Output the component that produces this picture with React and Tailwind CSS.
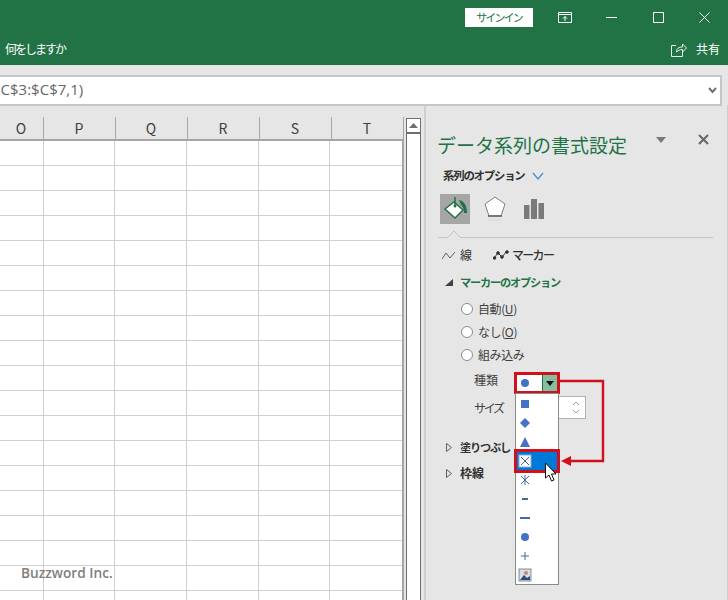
import React from "react";

const font = { fontFamily: '"Noto Sans CJK JP","Noto Sans",sans-serif' };
const cols = [
  ["O", "w-[44px]"],
  ["P", "w-[72px]"],
  ["Q", "w-[72px]"],
  ["R", "w-[72px]"],
  ["S", "w-[72px]"],
  ["T", "w-[72px]"],
];
const rows = Array.from({ length: 19 }, (_, i) => i);

function Radio({ label, u, checked }) {
  return (
    <div className="flex h-[23px] items-center pl-[35px] text-[12px] text-[#404040]">
      <span className="flex h-[12px] w-[12px] items-center justify-center rounded-full border border-[#8c8c8c] bg-white">
        {checked && <span className="h-[6px] w-[6px] rounded-full bg-[#6e6e6e]" />}
      </span>
      <span className="ml-[5px] tracking-[-0.4px]">
        {label}
        {u && (
          <>
            (<span className="underline">{u}</span>)
          </>
        )}
      </span>
    </div>
  );
}

function Marker({ children }) {
  return (
    <div className="flex h-[19px] items-center pl-[2px]">
      <svg width="14" height="14" viewBox="0 0 14 14">{children}</svg>
    </div>
  );
}

export default function App() {
  return (
    <div className="relative flex h-[600px] w-[728px] flex-col overflow-hidden bg-[#e6e6e6]" style={font}>
      {/* title bar + ribbon */}
      <div className="h-[65px] shrink-0 bg-[#217346] text-white">
        <div className="flex h-[34px] items-center pt-[1px]">
          <div className="ml-[465px] flex h-[19px] w-[68px] items-center justify-center bg-white text-[11px] tracking-[-1.9px] text-[#217346]">サインイン</div>
          <svg className="ml-[25px]" width="14" height="12" viewBox="0 0 14 12" fill="none" stroke="white">
            <path d="M.5.5h13v10H.5zM.5 2.5h13M7 9V4.5M5 6.5l2-2 2 2" />
          </svg>
          <svg className="ml-[34px]" width="11" height="11" viewBox="0 0 11 11" stroke="white"><path d="M0 5.5h11" /></svg>
          <svg className="ml-[36px]" width="11" height="11" viewBox="0 0 11 11" fill="none" stroke="white"><path d="M.5.5h10v10H.5z" /></svg>
          <svg className="ml-[35px]" width="11" height="11" viewBox="0 0 11 11" fill="none" stroke="white"><path d="M.5.5l10 10M10.5.5l-10 10" /></svg>
        </div>
        <div className="flex h-[30px] items-center justify-between pl-[5px] pr-[8px] text-[12px]">
          <span className="tracking-[-2px]">何をしますか</span>
          <span className="flex items-center">
            <svg width="16" height="15" viewBox="0 0 16 15" fill="none" stroke="white">
              <path d="M5 3.5H.5v11h11V10M5.5 10c0-3.5 2-5 6-5V2l4 4-4 4V7.5c-2.5 0-4 .8-6 2.5z" strokeWidth="0.9" />
            </svg>
            <span className="ml-[9px]">共有</span>
          </span>
        </div>
      </div>

      {/* formula bar */}
      <div className="shrink-0 pr-[6px] pt-[10px]">
        <div className="flex h-[31px] items-center justify-between overflow-hidden border-y-2 border-r-2 border-[#c6c6c6] bg-white pr-[3px] text-[15px] leading-none text-[#666666]">
          <span className="-ml-[8px] -mt-[2px]" style={{ fontFamily: '"Open Sans",sans-serif' }}>$C$3:$C$7,1)</span>
          <svg width="9" height="7" viewBox="0 0 9 7" fill="none" stroke="#707070" strokeWidth="2"><path d="M1 1l3.5 4L8 1" /></svg>
        </div>
      </div>

      {/* body */}
      <div className="flex min-h-0 flex-1 pt-[11px]">
        <div className="w-[404px] shrink-0 overflow-hidden">
          <div className="flex h-[24px] border-b-2 border-[#a6a6a6] bg-[#e6e6e6]">
            {cols.map(([c, w]) => (
              <div key={c} className={`${w} flex items-center justify-center border-r border-[#a6a6a6] pr-[1px] text-[14px] text-[#404040]`}>{c}</div>
            ))}
          </div>
          <div className="border-r-2 border-[#a6a6a6] bg-white">
            {rows.map((r) => (
              <div key={r} className="flex h-[25px]">
                {cols.map(([c, w]) => (
                  <div key={c} className={`${w} border-b border-r border-[#d0d0d0] last:border-r-0`} />
                ))}
              </div>
            ))}
          </div>
        </div>

        {/* scrollbar */}
        <div className="ml-[2px] mt-[1px] w-[15px] shrink-0 border-x border-t border-[#6e6e6e] bg-white">
          <div className="flex h-[15px] items-center justify-center border-b-2 border-[#6e6e6e]">
            <svg width="9" height="5" viewBox="0 0 9 5" fill="#6e6e6e"><path d="M4.5 0L9 5H0z" /></svg>
          </div>
        </div>

        {/* side panel */}
        <div className="-mt-[12px] ml-[3px] flex-1 border-l-2 border-r border-[#cfcfcf] pt-[12px]">
          <div className="relative flex h-[28px] items-center pl-[11px] pt-[27px] text-[19px] leading-none text-[#217346]">
            <span>データ系列の書式設定</span>
            <svg className="absolute left-[230px] top-[20px]" width="10" height="6" viewBox="0 0 10 6" fill="#7a7a7a"><path d="M0 0h10L5 6z" /></svg>
            <svg className="absolute left-[272px] top-[17px]" width="11" height="11" viewBox="0 0 11 11" stroke="#666" strokeWidth="2"><path d="M1 1l9 9M10 1l-9 9" /></svg>
          </div>
          <div className="mt-[23px] flex h-[16px] items-center pl-[17px] text-[11.4px] font-bold leading-none tracking-[-1.2px] text-[#303030]">
            系列のオプション
            <svg className="ml-[7px]" width="12" height="8" viewBox="0 0 12 8" fill="none" stroke="#4a90c8" strokeWidth="1.3"><path d="M1 1l5 6 5-6" /></svg>
          </div>
          <div className="mt-[10px] flex h-[30px] items-center pl-[14px]">
            <div className="flex h-[30px] w-[30px] items-center justify-center bg-[#a6a6a6]">
              <svg width="26" height="26" viewBox="0 0 26 26">
                <path d="M12 6l9 8-8 8-10-9z" fill="white" stroke="#217346" strokeWidth="1.5" />
                <path d="M13 1v9" stroke="#217346" strokeWidth="1.5" />
                <circle cx="13" cy="10" r="1.5" fill="#217346" />
                <path d="M17 4c5 1 8 5 8 13h-3c0-4-1-6-3-8z" fill="#217346" />
              </svg>
            </div>
            <svg className="ml-[13px]" width="24" height="28" viewBox="0 0 24 28" fill="white" stroke="#808080">
              <path d="M12 2l10 7-4 12H6L2 9z" />
              <path d="M5 21h14" stroke="#606060" strokeWidth="1.5" />
              <path d="M5 25h14" stroke="#d8d8d8" />
            </svg>
            <svg className="ml-[17px]" width="20" height="20" viewBox="0 0 20 20" fill="#7a7a7a">
              <path d="M0 6h5.5v14H0zM7 0h6v20H7zM14.5 4H20v16h-5.5z" />
            </svg>
          </div>
          <div className="relative ml-[12px] mr-[14px] mt-[13px] h-0 border-t border-[#c6c6c6]">
            <svg className="absolute -top-[8px] left-[9px]" width="14" height="8" viewBox="0 0 14 8" fill="#e6e6e6" stroke="#c6c6c6"><path d="M0 8l7-7 7 7" /></svg>
          </div>
          <div className="mt-[7px] flex h-[20px] items-center pl-[16px] text-[12px] text-[#303030]">
            <svg width="13" height="9" viewBox="0 0 13 9" fill="none" stroke="#606060"><path d="M0 8l4-6 4 5 5-6" /></svg>
            <span className="ml-[5px]">線</span>
            <svg className="ml-[21px]" width="16" height="10" viewBox="0 0 16 10" fill="none" stroke="#303030"><path d="M1 8l4-5 4 4 5-6" /><circle cx="1.5" cy="8" r="1.3" fill="#303030" /><circle cx="5" cy="3" r="1.3" fill="#303030" /><circle cx="9" cy="7" r="1.3" fill="#303030" /><circle cx="14" cy="2" r="1.3" fill="#303030" /></svg>
            <span className="ml-[3px] font-medium tracking-[-1.7px]">マーカー</span>
          </div>
          <div className="mt-[7px] flex h-[20px] items-center pl-[19px] text-[11.2px] font-bold tracking-[-1.2px] text-[#217346]">
            <svg width="8" height="7" viewBox="0 0 8 7" fill="#404040"><path d="M8 0v7H0z" /></svg>
            <span className="ml-[7px]">マーカーのオプション</span>
          </div>
          <div className="mt-[5px]">
            <Radio label="自動" u="U" />
            <Radio label="なし" u="O" />
            <Radio label="組み込み" />
          </div>
          <div className="flex h-[28px] items-center pl-[48px] text-[12px] text-[#404040]">
            種類
          </div>
          <div className="flex h-[27px] items-center pl-[48px] text-[12px] text-[#404040]">
            <span className="tracking-[-2.3px]">サイズ</span>
            <div className="ml-[50px] flex h-[23px] w-[33px] flex-col items-end justify-center gap-[3px] border border-[#b0b0b0] bg-white pr-[5px]">
              <svg width="8" height="5" viewBox="0 0 8 5" fill="none" stroke="#a0a0a0"><path d="M1 4l3-3 3 3" /></svg>
              <svg width="8" height="5" viewBox="0 0 8 5" fill="none" stroke="#a0a0a0"><path d="M1 1l3 3 3-3" /></svg>
            </div>
          </div>
          <div className="mt-[13px] flex h-[26px] items-center pl-[20px] text-[11.2px] font-bold tracking-[-1.2px] text-[#303030]">
            <svg width="6" height="9" viewBox="0 0 6 9" fill="none" stroke="#606060"><path d="M.5.5l5 4-5 4z" /></svg>
            <span className="ml-[8px]">塗りつぶし</span>
          </div>
          <div className="flex h-[26px] items-center pl-[20px] text-[12px] font-bold text-[#303030]">
            <svg width="6" height="9" viewBox="0 0 6 9" fill="none" stroke="#606060"><path d="M.5.5l5 4-5 4z" /></svg>
            <span className="ml-[8px]">枠線</span>
          </div>
        </div>
      </div>

      {/* watermark */}
      <div className="absolute left-[21px] top-[563px] text-[13.7px] font-semibold leading-[20px] text-[#7f7f7f]" style={{ fontFamily: '"Open Sans",sans-serif' }}>Buzzword Inc.</div>

      {/* marker combo (open) */}
      <div className="absolute left-[514px] top-[372px] flex h-[22px] w-[46px] border-[3px] border-[#d2101c] bg-white">
        <div className="flex w-[25px] items-center pl-[3px]">
          <svg width="10" height="10" viewBox="0 0 10 10"><circle cx="5" cy="5" r="4" fill="#4472c4" /></svg>
        </div>
        <div className="flex flex-1 items-center justify-center border-l border-[#217346] bg-[#86bfa0]">
          <svg width="8" height="5" viewBox="0 0 8 5" fill="#111"><path d="M0 0h8L4 5z" /></svg>
        </div>
      </div>

      {/* marker list */}
      <div className="absolute left-[515px] top-[393px] h-[192px] w-[44px] border border-[#8a8a8a] bg-white">
        <Marker><path d="M3 3h8v8H3z" fill="#4472c4" /></Marker>
        <Marker><path d="M7 2l5 5-5 5-5-5z" fill="#4472c4" /></Marker>
        <Marker><path d="M7 2l5 10H2z" fill="#4472c4" /></Marker>
        <div className="flex h-[19px] items-center bg-[#0078d7] pl-[2px]">
          <svg width="14" height="14" viewBox="0 0 14 14"><rect x="1" y="1" width="12" height="12" fill="white" stroke="#90b0d8" /><path d="M3 3l8 8M11 3l-8 8" stroke="#3f5f8f" /></svg>
        </div>
        <Marker><path d="M3 3l8 8M11 3l-8 8M7 2v10" stroke="#44699b" fill="none" /></Marker>
        <Marker><path d="M4 7h6" stroke="#44699b" strokeWidth="2" /></Marker>
        <Marker><path d="M2 7h10" stroke="#44699b" strokeWidth="2" /></Marker>
        <Marker><circle cx="7" cy="7" r="4" fill="#4472c4" /></Marker>
        <Marker><path d="M7 3v8M3 7h8" stroke="#44699b" fill="none" /></Marker>
        <Marker>
          <rect x="1" y="1" width="12" height="12" fill="#d8dfe8" stroke="#606060" strokeWidth="0.7" />
          <path d="M2 12l4-5 3 3 3-2v4z" fill="#2b4c7e" />
          <circle cx="8" cy="5" r="2" fill="#c08a70" />
        </Marker>
      </div>

      {/* highlight box */}
      <div className="pointer-events-none absolute left-[514px] top-[449px] h-[24px] w-[46px] border-[3px] border-[#d2101c]" />

      {/* arrow annotation */}
      <svg className="absolute left-[558px] top-[378px]" width="48" height="90" viewBox="0 0 48 90" fill="none">
        <path d="M2 3h43v80H10" stroke="#d2101c" strokeWidth="2.4" />
        <path d="M3 83l10-5v10z" fill="#d2101c" />
      </svg>

      {/* cursor */}
      <svg className="absolute left-[544px] top-[462px]" width="14" height="21" viewBox="0 0 14 21">
        <path d="M1.5 1v15l3.5-3 2.5 6 2.5-1-2.5-6H12z" fill="white" stroke="#111" strokeWidth="1" />
      </svg>
    </div>
  );
}
